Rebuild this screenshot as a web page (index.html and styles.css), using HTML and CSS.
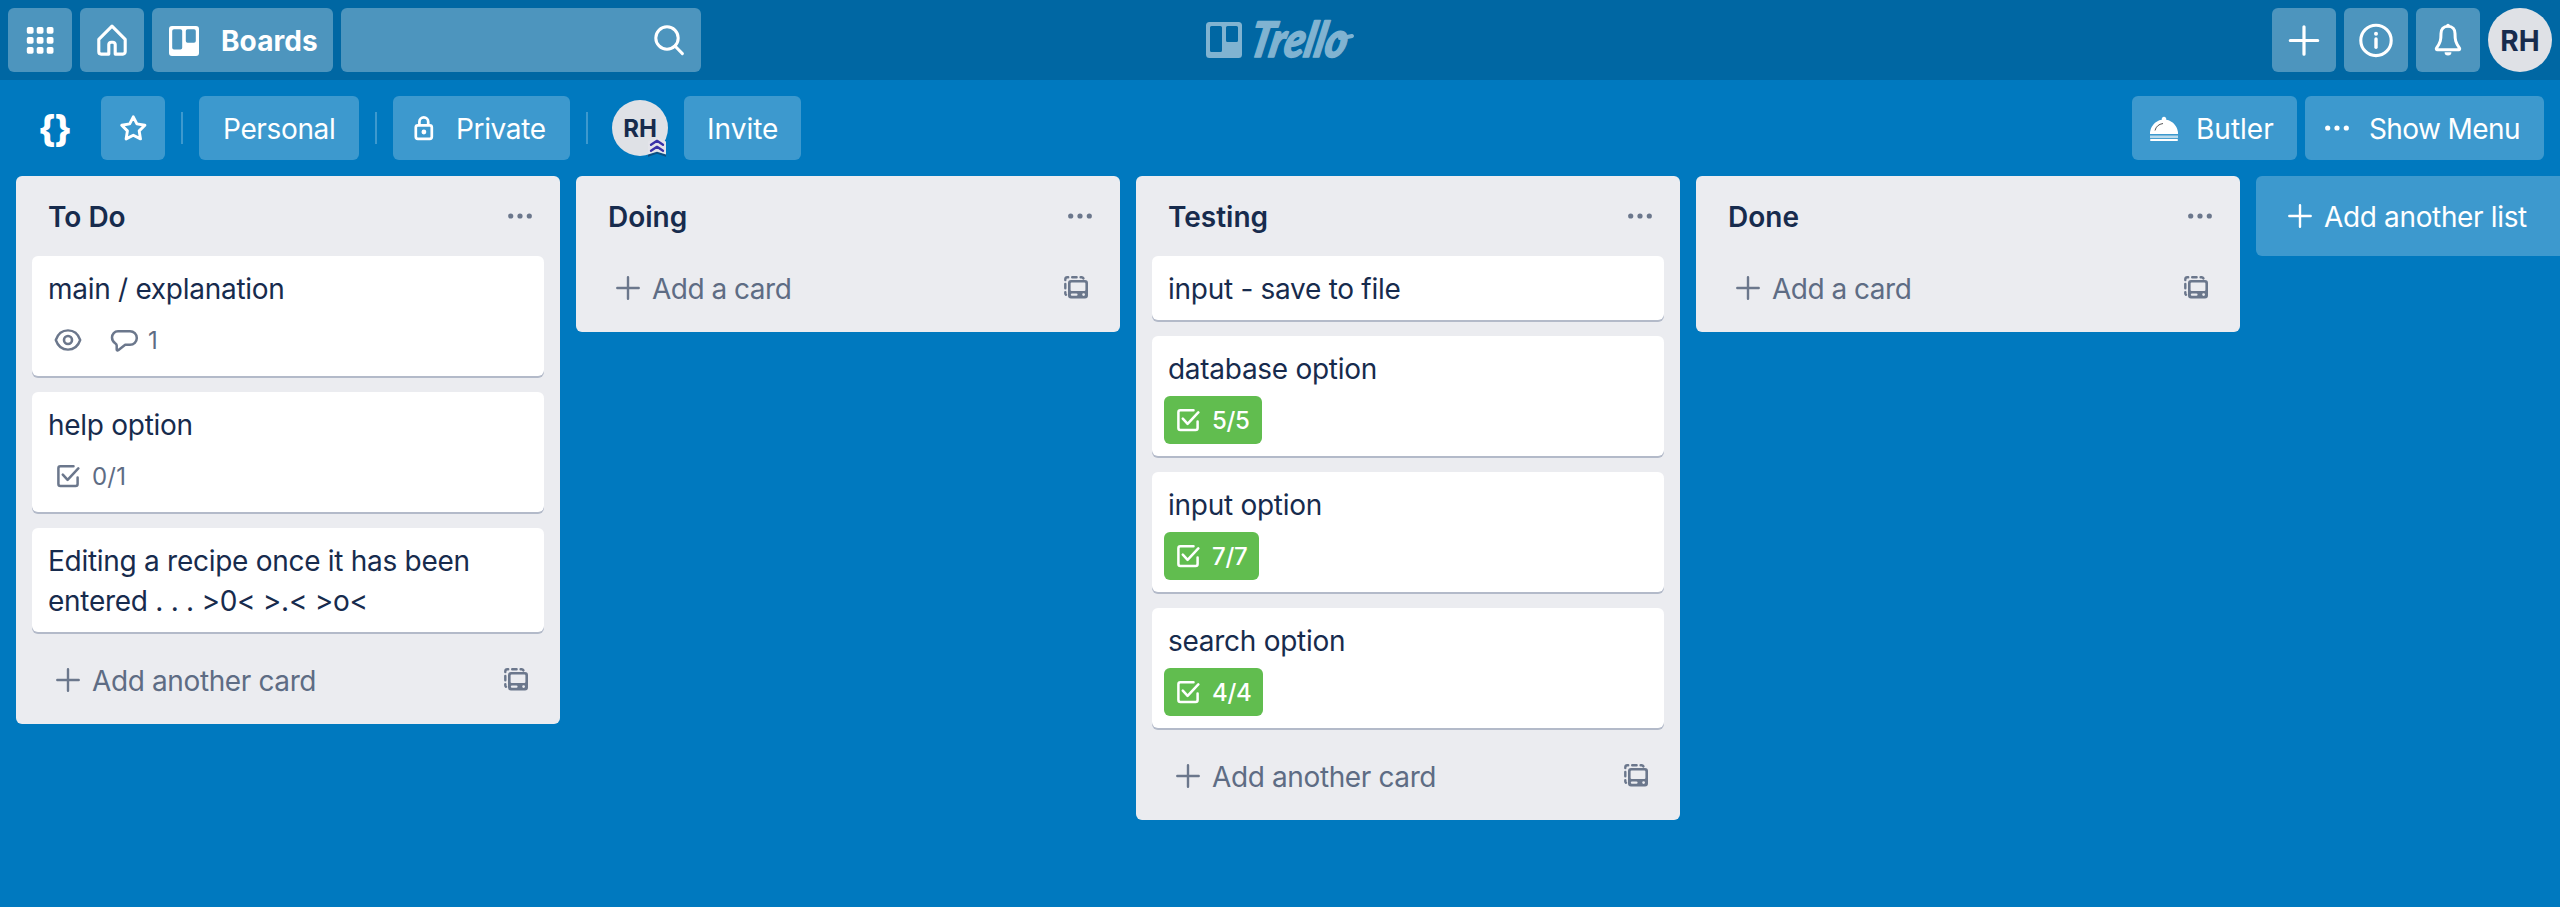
FILE: index.html
```html
<!DOCTYPE html>
<html lang="en">
<head>
<meta charset="utf-8">
<title>{} | Trello</title>
<link rel="stylesheet" href="styles.css">
</head>
<body>
<svg class="defs" aria-hidden="true">
  <symbol id="dots" viewBox="0 0 24 8"><g fill="currentColor"><circle cx="2.7" cy="4" r="2.6"/><circle cx="12" cy="4" r="2.6"/><circle cx="21.3" cy="4" r="2.6"/></g></symbol>
  <symbol id="plus" viewBox="0 0 24 24"><path d="M12 1.3V22.7M1.3 12H22.7" stroke="currentColor" stroke-width="2.4" stroke-linecap="round"/></symbol>
  <symbol id="check" viewBox="0 0 24 24"><g fill="none" stroke="currentColor" stroke-width="2.5" stroke-linecap="round" stroke-linejoin="round"><path d="M17.5 2.3H4.4a2 2 0 0 0-2 2V19.9a2 2 0 0 0 2 2H19.6a2 2 0 0 0 2-2V13.6"/><path d="M6.8 10.6L11.6 15.9L22.3 4.4"/></g></symbol>
  <symbol id="template" viewBox="0 0 24 24"><path fill="currentColor" fill-rule="evenodd" d="M7 4H21a3 3 0 0 1 3 3V19.6a3 3 0 0 1-3 3H7a3 3 0 0 1-3-3V7a3 3 0 0 1 3-3zM7.6 6.6a1 1 0 0 0-1 1V14a1 1 0 0 0 1 1H20.4a1 1 0 0 0 1-1V7.6a1 1 0 0 0-1-1zM8 17.4a1.2 1.2 0 0 0 0 2.4H12.4a1.2 1.2 0 0 0 0-2.4zM19.6 17.2a1.4 1.4 0 1 0 0 2.8a1.4 1.4 0 1 0 0-2.8z"/><path d="M1.3 4V3.2A2 2 0 0 1 3.3 1.3H4.2M8.2 1.3H12.6M16.6 1.3H17.4A2 2 0 0 1 19.4 2.4M1.3 8V12.2M1.3 16.2V17.4A2 2 0 0 0 2 18.8" fill="none" stroke="currentColor" stroke-width="2.4" stroke-linecap="round"/></symbol>
</svg>

<header class="topbar">
  <div class="group">
    <a class="nav-btn"><svg viewBox="0 0 64 64"><g fill="#fff"><rect x="18.8" y="19" width="6.8" height="6.8" rx="1.8"/><rect x="28.7" y="19" width="6.8" height="6.8" rx="1.8"/><rect x="38.7" y="19" width="6.8" height="6.8" rx="1.8"/><rect x="18.8" y="29" width="6.8" height="6.8" rx="1.8"/><rect x="28.7" y="29" width="6.8" height="6.8" rx="1.8"/><rect x="38.7" y="29" width="6.8" height="6.8" rx="1.8"/><rect x="18.8" y="39" width="6.8" height="6.8" rx="1.8"/><rect x="28.7" y="39" width="6.8" height="6.8" rx="1.8"/><rect x="38.7" y="39" width="6.8" height="6.8" rx="1.8"/></g></svg></a>
    <a class="nav-btn"><svg viewBox="0 0 64 64"><path d="M32 18.2L18.8 31.4V43.8a2.3 2.3 0 0 0 2.3 2.3H28.8V36.6a2.4 2.4 0 0 1 2.4-2.4H32.8a2.4 2.4 0 0 1 2.4 2.4V46.1H42.9a2.3 2.3 0 0 0 2.3-2.3V31.4z" fill="none" stroke="#fff" stroke-width="3.1" stroke-linejoin="round"/></svg></a>
    <a class="nav-btn boards"><svg class="board-icon" viewBox="0 0 30 30"><path fill="#fff" fill-rule="evenodd" d="M3 0H27a3 3 0 0 1 3 3V27a3 3 0 0 1-3 3H3a3 3 0 0 1-3-3V3a3 3 0 0 1 3-3zM5 3.3A1.8 1.8 0 0 0 3.2 5.1V21.7A1.8 1.8 0 0 0 5 23.5H11.4A1.8 1.8 0 0 0 13.2 21.7V5.1A1.8 1.8 0 0 0 11.4 3.3zM18.6 3.3A1.8 1.8 0 0 0 16.8 5.1V14.9A1.8 1.8 0 0 0 18.6 16.7H25A1.8 1.8 0 0 0 26.8 14.9V5.1A1.8 1.8 0 0 0 25 3.3z"/></svg><span>Boards</span></a>
    <div class="search"><svg viewBox="0 0 32 32"><g fill="none" stroke="#fff" stroke-width="3" stroke-linecap="round"><circle cx="14" cy="14" r="11.2"/><path d="M22.2 22.2L29.4 29.6"/></g></svg></div>
  </div>
  <div class="logo">
    <svg viewBox="0 0 150 48"><path fill="#80b3d1" fill-rule="evenodd" d="M3.5 6H32.5A3.5 3.5 0 0 1 36 9.5V38.5A3.5 3.5 0 0 1 32.5 42H3.5A3.5 3.5 0 0 1 0 38.5V9.5A3.5 3.5 0 0 1 3.5 6zM5.5 10A1.5 1.5 0 0 0 4 11.5V34.5A1.5 1.5 0 0 0 5.5 36H14.5A1.5 1.5 0 0 0 16 34.5V11.5A1.5 1.5 0 0 0 14.5 10zM21.5 10A1.5 1.5 0 0 0 20 11.5V24.5A1.5 1.5 0 0 0 21.5 26H30.5A1.5 1.5 0 0 0 32 24.5V11.5A1.5 1.5 0 0 0 30.5 10z"/><text class="wordmark" transform="translate(41.5 41.3) skewX(-12)" textLength="97" lengthAdjust="spacingAndGlyphs">Trello</text><path d="M134 22Q140 21.500 146 20" fill="none" stroke="#80b3d1" stroke-width="4" stroke-linecap="round"/></svg>
  </div>
  <div class="group">
    <a class="nav-btn"><svg viewBox="0 0 64 64"><path d="M32 18.8V46.2M18.3 32.5H45.7" stroke="#fff" stroke-width="3.2" stroke-linecap="round"/></svg></a>
    <a class="nav-btn"><svg viewBox="0 0 64 64"><circle cx="32" cy="32.4" r="15.2" fill="none" stroke="#fff" stroke-width="3.1"/><circle cx="32" cy="25.8" r="2" fill="#fff"/><path d="M32 31V39.3" stroke="#fff" stroke-width="3.4" stroke-linecap="round"/></svg></a>
    <a class="nav-btn"><svg viewBox="0 0 64 64"><path d="M32 18.2C27.5 18.2 25 21.5 25 25.5C25 32 24.5 34.5 20.5 40.2C20 41.2 20.4 41.8 21.3 41.8H42.7C43.6 41.8 44 41.2 43.5 40.2C39.5 34.5 39 32 39 25.5C39 21.5 36.5 18.2 32 18.2z" fill="none" stroke="#fff" stroke-width="3" stroke-linejoin="round"/><circle cx="32" cy="17.6" r="1.8" fill="#fff"/><path d="M28.6 44.2H35.4A3.4 3.2 0 0 1 28.6 44.2z" fill="#fff"/></svg></a>
    <span class="avatar avatar-lg">RH</span>
  </div>
</header>

<section class="board-header">
  <div class="board-left">
    <h1 class="board-name">{}</h1>
    <a class="bh-btn star"><svg viewBox="0 0 64 64"><path d="M32.3 20.8L35.9 27.9L43.9 29.2L38.2 34.9L39.5 42.9L32.3 39.3L25.1 42.9L26.4 34.9L20.7 29.2L28.7 27.9z" fill="none" stroke="#fff" stroke-width="2.9" stroke-linejoin="round"/></svg></a>
    <i class="divider"></i>
    <a class="bh-btn personal">Personal</a>
    <i class="divider"></i>
    <a class="bh-btn private"><svg class="lock" viewBox="0 0 20 24"><g fill="none" stroke="#fff" stroke-width="2.7"><rect x="1.8" y="9.4" width="16" height="13.4" rx="2"/><path d="M5.4 9.4V5.8A4.4 4.4 0 0 1 14.2 5.8V9.4"/></g><circle cx="9.9" cy="16" r="2.4" fill="#fff"/></svg><span>Private</span></a>
    <i class="divider"></i>
    <span class="avatar avatar-sm">RH<svg class="admin" viewBox="0 0 20 20"><path d="M1 4.5L10 1L19 4.5V18.5L10 15.5L1 18.5z" fill="#0b4f83" transform="translate(0 1.3)"/><path d="M1 4.5L10 .8L19 4.5V17.5L10 14.8L1 17.5z" fill="#e4e4ea"/><path d="M4 7.8L10 3.8L16 7.8M4 13.8L10 9.8L16 13.8" fill="none" stroke="#3a31a8" stroke-width="2.3" stroke-linecap="round" stroke-linejoin="round"/></svg></span>
    <a class="bh-btn invite">Invite</a>
  </div>
  <div class="board-right">
    <a class="bh-btn butler"><svg viewBox="0 0 28 26"><path d="M0 18A14 14 0 0 1 11.8 3.8A2.3 2.3 0 1 1 16.2 3.8A14 14 0 0 1 28 18z" fill="#fff"/><path d="M5 14.5Q6.5 8.5 13 7.5" fill="none" stroke="#555" stroke-width="1"/><path d="M0 20.8H28" stroke="#fff" stroke-width="2.6" opacity=".65"/><path d="M1 24H27" stroke="#fff" stroke-width="2" stroke-linecap="round"/></svg><span>Butler</span></a>
    <a class="bh-btn menu"><svg><use href="#dots"/></svg><span>Show Menu</span></a>
  </div>
</section>

<main class="lists">
  <section class="list">
    <div class="list-head"><h2>To Do</h2><svg class="dots"><use href="#dots"/></svg></div>
    <article class="card"><p>main / explanation</p>
      <div class="badges">
        <span class="badge"><svg viewBox="0 0 24 24"><path d="M-.2 12C2 5.5 6.5 2.4 12 2.4S22 5.5 24.2 12C22 18.5 17.5 21.6 12 21.6S2 18.5-.2 12z" fill="none" stroke="currentColor" stroke-width="2.4" stroke-linejoin="round"/><circle cx="12" cy="12" r="4" fill="none" stroke="currentColor" stroke-width="2.6"/></svg></span>
        <span class="badge"><svg viewBox="0 0 24 24"><path d="M6 3.2H18A6.4 6.4 0 0 1 18 16.8H13.2L6.2 22.3C5.5 22.8 4.7 22.4 4.7 21.6V17.6C4.7 16.4 4.2 16 3.2 15.3C1.2 14 0 12.3 0 9.6A6 6.3 0 0 1 6 3.2z" fill="none" stroke="currentColor" stroke-width="2.5" stroke-linejoin="round"/></svg><span>1</span></span>
      </div></article>
    <article class="card"><p>help option</p>
      <div class="badges"><span class="badge"><svg><use href="#check"/></svg><span>0/1</span></span></div></article>
    <article class="card"><p>Editing a recipe once it has been entered . . . &gt;0&lt; &gt;.&lt; &gt;o&lt;</p></article>
    <div class="list-foot"><svg><use href="#plus"/></svg><span>Add another card</span><svg class="tpl"><use href="#template"/></svg></div>
  </section>

  <section class="list">
    <div class="list-head"><h2>Doing</h2><svg class="dots"><use href="#dots"/></svg></div>
    <div class="list-foot"><svg><use href="#plus"/></svg><span class="short">Add a card</span><svg class="tpl"><use href="#template"/></svg></div>
  </section>

  <section class="list">
    <div class="list-head"><h2>Testing</h2><svg class="dots"><use href="#dots"/></svg></div>
    <article class="card"><p>input - save to file</p></article>
    <article class="card"><p>database option</p>
      <div class="badges"><span class="badge done"><svg><use href="#check"/></svg><span>5/5</span></span></div></article>
    <article class="card"><p>input option</p>
      <div class="badges"><span class="badge done"><svg><use href="#check"/></svg><span>7/7</span></span></div></article>
    <article class="card"><p>search option</p>
      <div class="badges"><span class="badge done"><svg><use href="#check"/></svg><span>4/4</span></span></div></article>
    <div class="list-foot"><svg><use href="#plus"/></svg><span>Add another card</span><svg class="tpl"><use href="#template"/></svg></div>
  </section>

  <section class="list">
    <div class="list-head"><h2>Done</h2><svg class="dots"><use href="#dots"/></svg></div>
    <div class="list-foot"><svg><use href="#plus"/></svg><span class="short">Add a card</span><svg class="tpl"><use href="#template"/></svg></div>
  </section>

  <a class="add-list"><svg><use href="#plus"/></svg><span>Add another list</span></a>
</main>
</body>
</html>
```
FILE: styles.css
```css
* { box-sizing: border-box; }

body {
  margin: 0;
  height: 907px;
  overflow: hidden;
  background: #0079bf;
  color: #172b4d;
  font: 400 28px/40px Inter, "Liberation Sans", sans-serif;
  letter-spacing: -0.28px;
}

h1, h2, p { margin: 0; }
svg { display: block; flex: none; overflow: visible; }
.defs { position: absolute; width: 0; height: 0; }

/* top bar */
.topbar {
  display: grid;
  grid-template-columns: 1fr 150px 1fr;
  height: 80px;
  padding: 8px;
  background: #0067a3;
}
.group { display: flex; gap: 8px; }
.group:last-child { justify-content: flex-end; }
.nav-btn, .search {
  display: flex;
  align-items: center;
  height: 64px;
  border-radius: 6px;
  background: #4d95be;
}
.nav-btn { width: 64px; flex: none; }
.nav-btn svg { width: 64px; height: 64px; }
.nav-btn.boards {
  width: 181px;
  padding: 2px 0 0 17px;
  gap: 22px;
  color: #fff;
  font-weight: 700;
  letter-spacing: 0.08px;
}
.nav-btn .board-icon { width: 30px; height: 30px; margin-top: -1px; }
.search { width: 360px; justify-content: flex-end; padding-right: 16px; }
.search svg { width: 32px; height: 32px; }

.logo { display: flex; align-items: center; margin-left: 1px; }
.logo svg { width: 150px; height: 48px; }
.wordmark {
  fill: #80b3d1;
  stroke: #80b3d1;
  stroke-width: 1.6;
  stroke-linejoin: round;
  font: italic 900 49px Lato, sans-serif;
  letter-spacing: 0;
}

.avatar {
  display: flex;
  flex: none;
  align-items: center;
  justify-content: center;
  border-radius: 50%;
  background: #dfe1e6;
  color: #172b4d;
  font-weight: 700;
  letter-spacing: 0;
}
.avatar-lg { width: 64px; height: 64px; padding-top: 2px; }
.avatar-sm { position: relative; width: 56px; height: 56px; margin-left: 24px; padding-top: 2px; font-size: 24px; }
.admin { position: absolute; right: 1px; bottom: -1px; width: 20px; height: 20px; }

/* board header */
.board-header {
  display: flex;
  justify-content: space-between;
  height: 96px;
  padding: 16px 16px 16px 38px;
  color: #fff;
}
.board-left, .board-right { display: flex; align-items: center; }
.board-right { gap: 8px; }
.board-name { width: 63px; padding-top: 2px; font-size: 36px; font-weight: 800; letter-spacing: -1px; white-space: nowrap; }
.bh-btn {
  display: flex;
  align-items: center;
  height: 64px;
  padding-top: 2px;
  border-radius: 6px;
  background: #3d99ce;
  letter-spacing: -0.35px;
}
.star { width: 64px; padding: 0; }
.star svg { width: 64px; height: 64px; }
.divider { width: 2px; height: 32px; margin-left: 16px; background: #3d99ce; }
.personal { width: 160px; margin-left: 16px; padding-left: 24px; }
.private { width: 177px; margin-left: 16px; padding-left: 21px; gap: 22px; }
.lock { width: 20px; height: 24px; margin-top: -2px; }
.invite { width: 117px; margin-left: 16px; padding-left: 23px; letter-spacing: 0; }
.butler { width: 165px; padding-left: 18px; gap: 18px; letter-spacing: 0; }
.butler svg { width: 28px; height: 26px; margin-top: -1px; }
.menu { width: 239px; padding-left: 20px; gap: 20px; letter-spacing: -0.6px; }
.menu svg { width: 24px; height: 8px; margin-top: -2px; }

/* lists */
.lists { display: flex; align-items: flex-start; gap: 16px; padding-left: 16px; }
.list {
  display: flex;
  flex: none;
  flex-direction: column;
  width: 544px;
  padding: 0 16px;
  border-radius: 6px;
  background: #ebecf0;
}
.list-head {
  display: flex;
  align-items: center;
  justify-content: space-between;
  height: 80px;
  padding: 0 12px 0 16px;
}
.list-head h2 { padding-top: 2px; font-size: 28px; font-weight: 600; letter-spacing: 0; }
.dots { width: 24px; height: 8px; color: #6b778c; }
.card {
  margin-bottom: 16px;
  padding: 13px 12px 11px 16px;
  border-radius: 6px;
  background: #fff;
  box-shadow: 0 2px 0 #b3bac9;
}
.badges { display: flex; gap: 8px; margin: 7px 0 1px -4px; }
.badge {
  display: flex;
  align-items: center;
  gap: 12px;
  height: 48px;
  padding: 0 12px;
  border-radius: 6px;
  color: #5e6c84;
  font-size: 24px;
  letter-spacing: 0.2px;
}
.badge svg { width: 24px; height: 24px; color: #6b778c; }
.badge span { padding-top: 1px; }
.badge.done { background: #61bd4f; color: #fff; font-weight: 500; letter-spacing: -0.3px; }
.badge.done svg { color: #fff; }

.list-foot {
  display: flex;
  align-items: center;
  height: 76px;
  padding: 0 16px 12px 24px;
  color: #5e6c84;
}
.list-foot svg { width: 24px; height: 24px; color: #6b778c; }
.list-foot span { flex: 1; padding: 2px 0 0 12px; letter-spacing: -0.38px; }
.list-foot .short { letter-spacing: -0.5px; }

.add-list {
  display: flex;
  flex: 1;
  align-items: center;
  height: 80px;
  padding-left: 32px;
  gap: 12px;
  border-radius: 6px 0 0 6px;
  background: #3d99ce;
  color: #fff;
  letter-spacing: -0.35px;
}
.add-list svg { width: 24px; height: 24px; }
.add-list span { padding-top: 2px; }
```
